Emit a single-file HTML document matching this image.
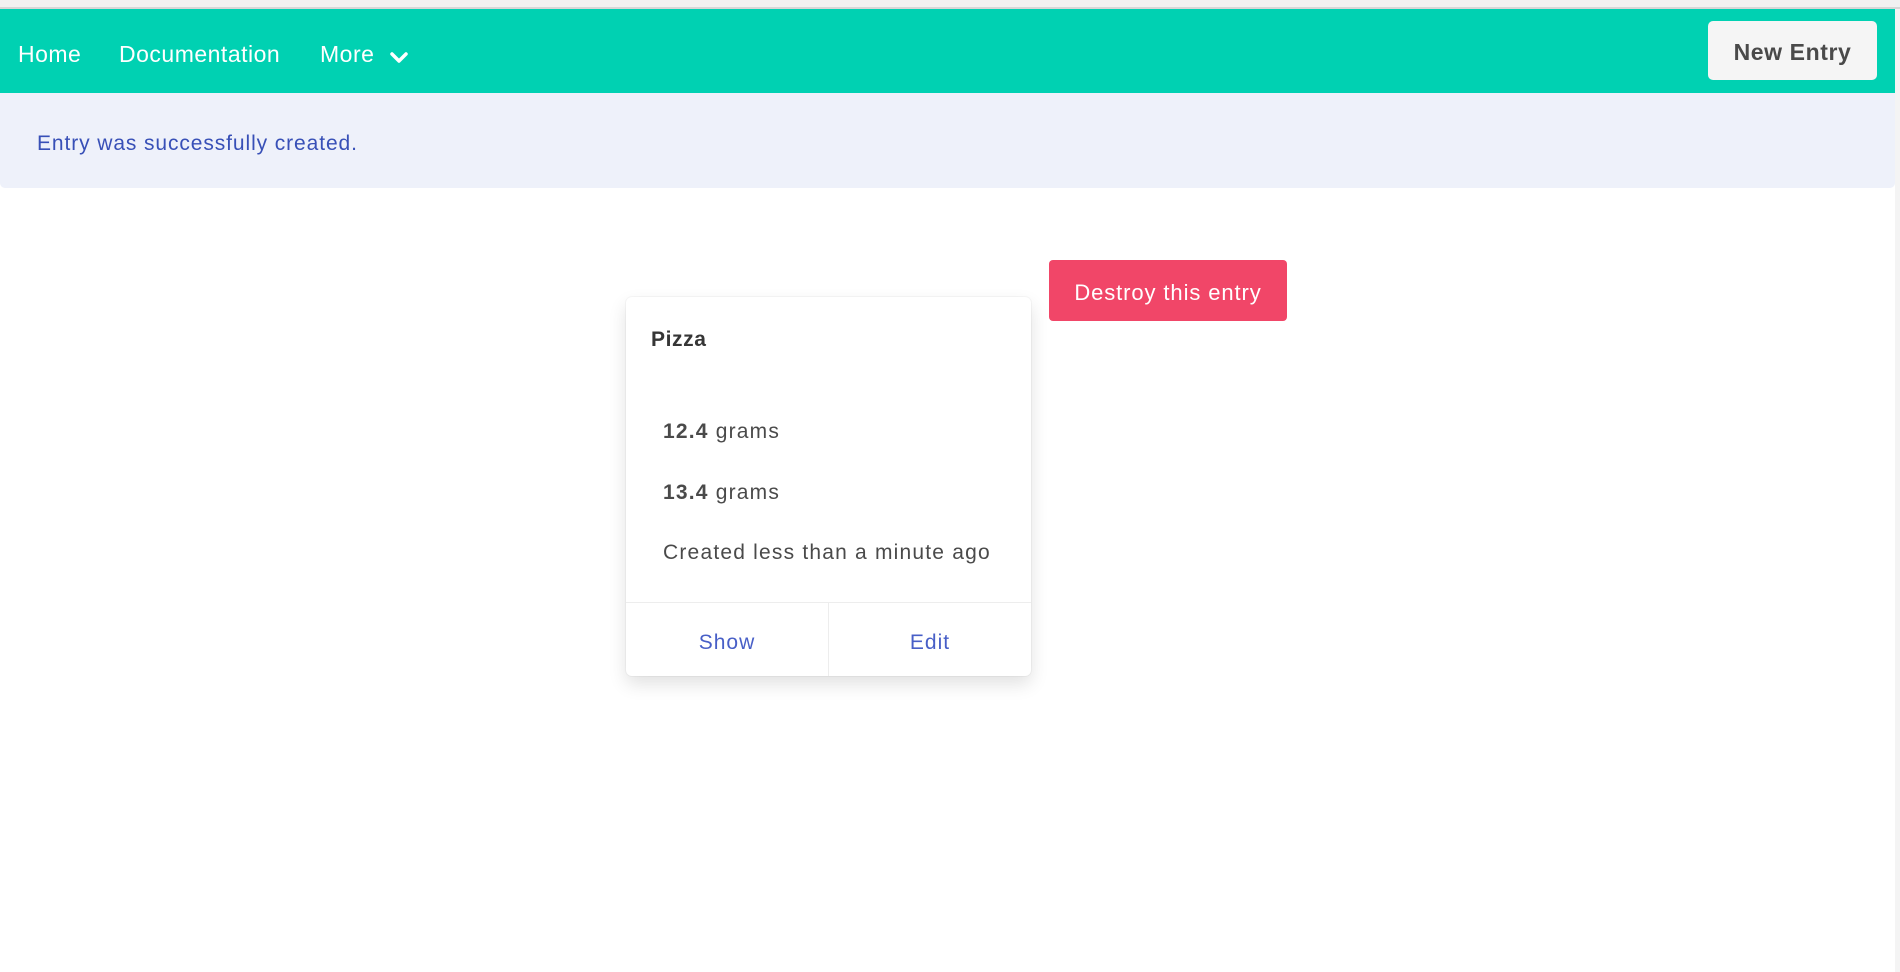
<!DOCTYPE html>
<html><head><meta charset="utf-8"><style>
*{box-sizing:border-box;margin:0;padding:0}
body{width:1900px;height:972px;background:#fff;font-family:"Liberation Sans",sans-serif;color:#4a4a4a;position:relative;overflow:hidden}
.top{position:absolute;left:0;top:0;width:1900px;height:9px;background:#f1f1f1;border-bottom:2px solid #d6d6d6}
.nav{position:absolute;left:0;top:9px;width:1895px;height:84px;background:#00d1b2}
.nav a{position:absolute;top:3px;line-height:84px;color:#fff;font-size:23px;letter-spacing:0.5px}
.btn{position:absolute;left:1708px;top:12px;width:169px;height:59px;background:#f5f5f5;border-radius:5px;color:#4a4a4a;font-weight:bold;font-size:23px;letter-spacing:0.6px;line-height:63px;text-align:center}
.note{position:absolute;left:0;top:93px;width:1895px;height:95px;background:#eef1fa;border-radius:0 0 5px 5px;color:#3850b7;font-size:21px;letter-spacing:0.9px;line-height:101px;padding-left:37px}
.sb{position:absolute;left:1895px;top:9px;width:5px;height:963px;background:#f4f4f4}
.card{position:absolute;left:626px;top:297px;width:405px;height:379px;border-radius:6px;box-shadow:0 8px 18px rgba(10,10,10,.12),0 0 0 1px rgba(10,10,10,.03);background:#fff}
.card .t{position:absolute;left:25px;top:31px;font-weight:bold;font-size:21px;letter-spacing:0.6px;color:#363636}
.card p{position:absolute;left:37px;font-size:21px;letter-spacing:1.2px}
.foot{position:absolute;left:0;top:305px;width:405px;height:74px;border-top:1px solid #ededed;display:flex}
.foot div{flex:1;text-align:center;line-height:80px;color:#485fc7;font-size:21px;letter-spacing:1px}
.foot div+div{border-left:1px solid #ededed}
.del{position:absolute;left:1049px;top:260px;width:238px;height:61px;background:#f14668;border-radius:4px;color:#fff;font-size:22px;letter-spacing:0.9px;line-height:65px;text-align:center}
</style></head><body>
<div class="top"></div>
<div class="nav">
<a style="left:18px">Home</a>
<a style="left:119px">Documentation</a>
<a style="left:320px">More</a>
<svg style="position:absolute;left:389px;top:42px" width="20" height="14" viewBox="0 0 20 14"><path d="M3 3 L10 10 L17 3" stroke="#fff" stroke-width="3.5" fill="none" stroke-linecap="round" stroke-linejoin="round"/></svg>
<div class="btn">New Entry</div>
</div>
<div class="sb"></div>
<div class="note">Entry was successfully created.</div>
<div class="card">
<div class="t">Pizza</div>
<p style="top:123px"><b>12.4</b> grams</p>
<p style="top:184px"><b>13.4</b> grams</p>
<p style="top:244px">Created less than a minute ago</p>
<div class="foot"><div>Show</div><div>Edit</div></div>
</div>
<div class="del">Destroy this entry</div>
</body></html>
